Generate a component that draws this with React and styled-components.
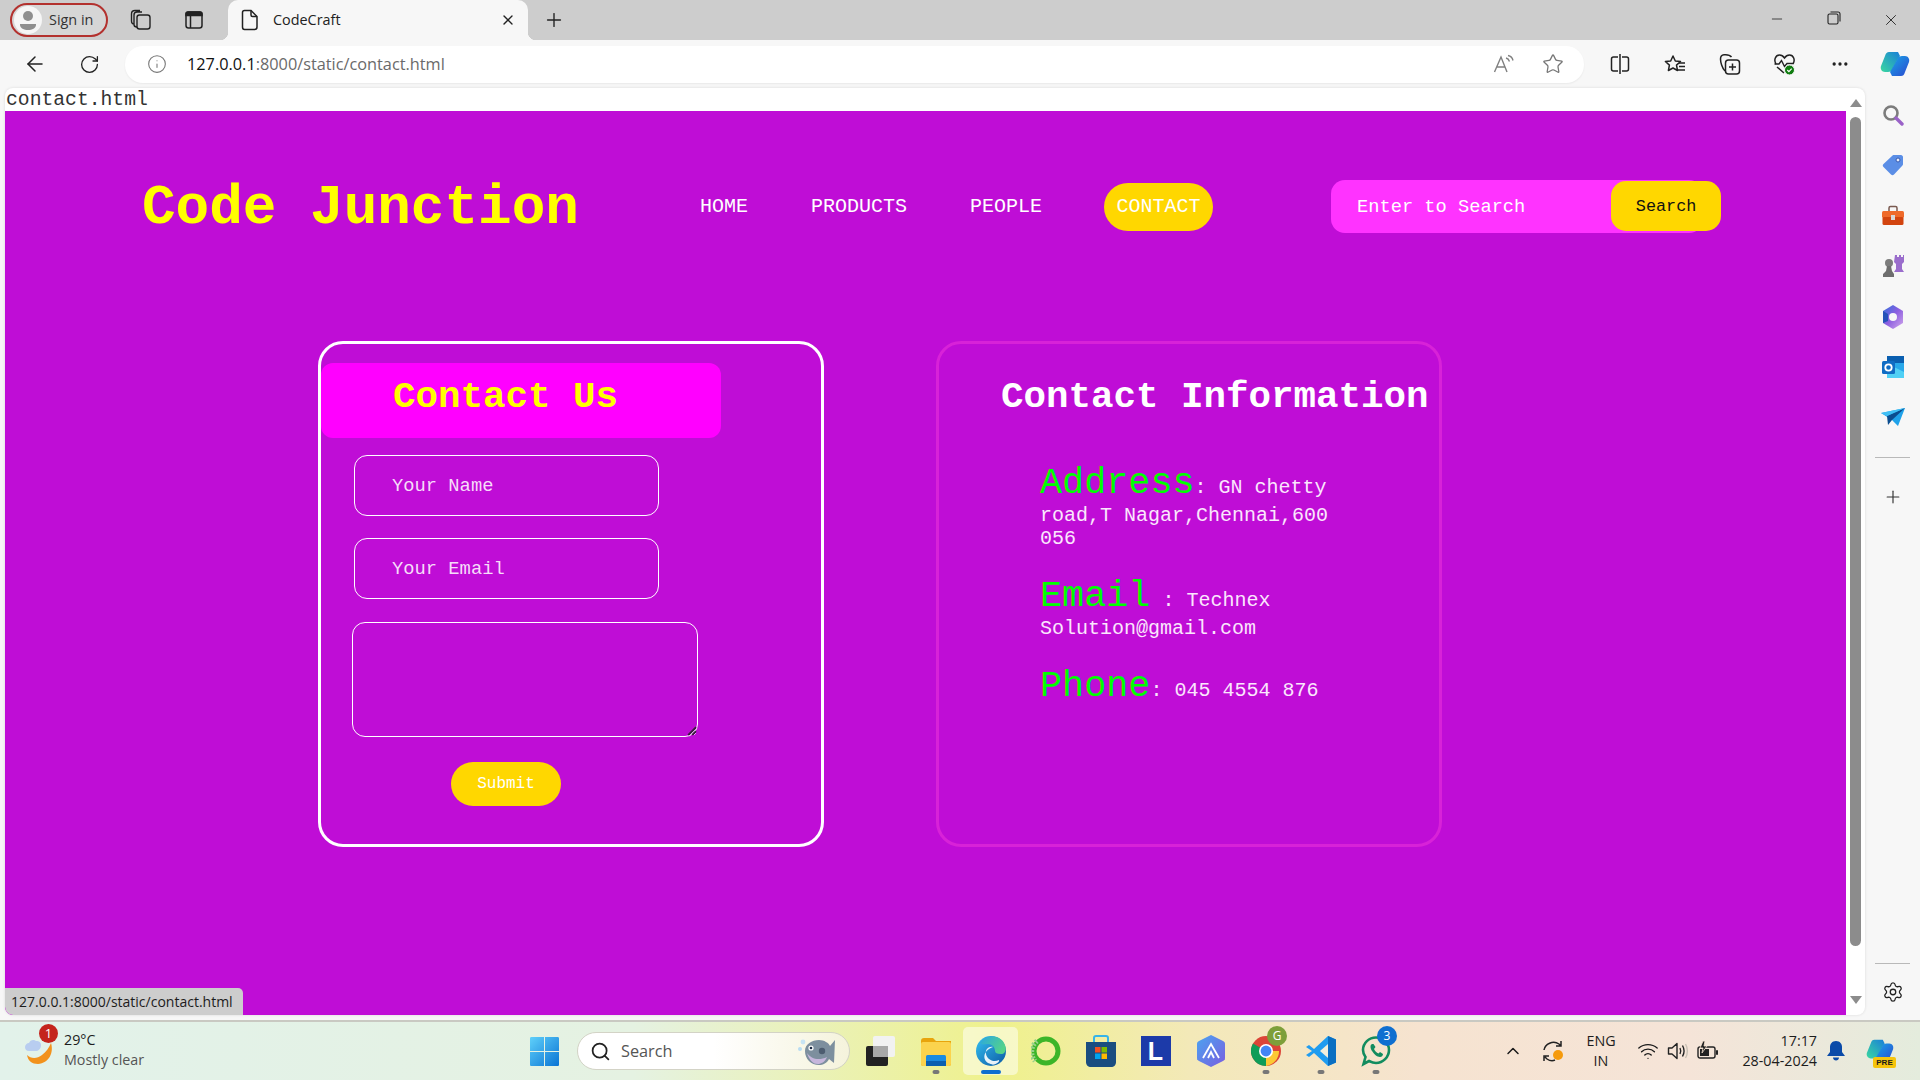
import React from "react";
import styled, { createGlobalStyle } from "styled-components";
import {
  ArrowLeft,
  RotateCw,
  Info,
  Star,
  X,
  Plus,
  Minus,
  Ellipsis,
  ChevronUp,
  Wifi,
  Settings,
  Search as SearchIcon,
} from "lucide-react";

const GlobalStyle = createGlobalStyle`
  html, body {
    margin: 0;
    padding: 0;
    width: 1920px;
    height: 1080px;
    overflow: hidden;
  }
  * { box-sizing: border-box; }
`;

const MONO = `"Liberation Mono", "Courier New", monospace`;
const UI = `"Open Sans", "Noto Sans", sans-serif`;

const Screen = styled.div`
  width: 1920px;
  height: 1080px;
  display: flex;
  flex-direction: column;
  font-family: ${UI};
  background: #f7f7f7;
  position: relative;
  overflow: hidden;
`;

/* ---- browser tab strip ---- */
const TabStrip = styled.div`
  height: 40px;
  flex: none;
  background: #cdcdcd;
  display: flex;
  align-items: center;
`;

const SignIn = styled.div`
  width: 98px;
  height: 34px;
  margin-left: 10px;
  border: 2px solid #b3312e;
  border-radius: 17px;
  display: flex;
  align-items: center;
  gap: 7px;
  padding: 0 0 1px 2px;
  font-size: 14.4px;
  color: #333;
  background: #d6d6d6;
`;

const Avatar = styled.span`
  width: 28px;
  height: 28px;
  margin-top: 1px;
  border-radius: 50%;
  background: #f6f6f6;
  display: flex;
  align-items: center;
  justify-content: center;
`;

const StripButton = styled.span`
  width: 53px;
  display: flex;
  justify-content: center;
  align-items: center;
  color: #222;
`;

const StripGroup = styled.div`
  margin-left: 6px;
  display: flex;
`;

const Tab = styled.div`
  width: 300px;
  height: 40px;
  margin-left: 8px;
  background: #f7f7f7;
  border-radius: 10px 10px 0 0;
  display: flex;
  align-items: center;
  padding: 0 12px 1px 13px;
  font-size: 14.4px;
  color: #222;
  position: relative;
  &::before, &::after {
    content: "";
    position: absolute;
    bottom: 0;
    width: 8px;
    height: 8px;
  }
  &::before {
    left: -8px;
    background: radial-gradient(circle at 0 0, transparent 8px, #f7f7f7 8.5px);
  }
  &::after {
    right: -8px;
    background: radial-gradient(circle at 100% 0, transparent 8px, #f7f7f7 8.5px);
  }
`;

const TabTitle = styled.span`
  margin-left: 14px;
  flex: 1;
`;

const NewTab = styled.span`
  width: 36px;
  margin-left: 8px;
  display: flex;
  justify-content: center;
  color: #222;
`;

const WindowControls = styled.div`
  margin-left: auto;
  padding-right: 1px;
  display: flex;
`;

const WindowButton = styled.span`
  width: 57px;
  display: flex;
  justify-content: center;
  color: #222;
`;

/* ---- browser toolbar ---- */
const Toolbar = styled.div`
  height: 48px;
  flex: none;
  display: flex;
  align-items: center;
  padding-left: 7px;
  background: #f7f7f7;
`;

const ToolButton = styled.span`
  width: 55px;
  height: 36px;
  flex: none;
  display: flex;
  align-items: center;
  justify-content: center;
  color: #222;
`;

const AddressBar = styled.div`
  width: 1459px;
  height: 37px;
  flex: none;
  margin: 0 8px 0 8px;
  border-radius: 18px;
  background: #fff;
  box-shadow: 0 1px 2px rgba(0, 0, 0, 0.06);
  display: flex;
  align-items: center;
  padding: 0 7px 0 22px;
  color: #777;
`;

const Url = styled.span`
  margin-left: 20px;
  flex: 1;
  font-size: 16.3px;
  padding-bottom: 1px;
  color: #6a6a6a;
  b {
    font-weight: 400;
    color: #111;
  }
`;

const AddressButton = styled.span`
  width: 49px;
  display: flex;
  justify-content: center;
  color: #777;
`;

/* ---- viewport and sidebar ---- */
const BrowserBody = styled.div`
  flex: 1;
  min-height: 0;
  display: flex;
  padding-left: 5px;
`;

const Viewport = styled.div`
  width: 1860px;
  height: 927px;
  flex: none;
  display: flex;
  background: #fff;
  border-radius: 8px;
  overflow: hidden;
  box-shadow: 0 0 3px rgba(0, 0, 0, 0.12);
  position: relative;
`;

const Document = styled.div`
  width: 1841px;
  flex: none;
  display: flex;
  flex-direction: column;
`;

const FileName = styled.div`
  height: 23px;
  flex: none;
  padding-left: 1px;
  font-family: ${MONO};
  font-size: 19.7px;
  line-height: 25px;
  color: #333;
`;

const Scrollbar = styled.div`
  flex: 1;
  display: flex;
  flex-direction: column;
  align-items: center;
  padding-top: 11px;
`;

const ScrollArrow = styled.span`
  width: 0;
  height: 0;
  border-left: 6px solid transparent;
  border-right: 6px solid transparent;
  ${(p) => (p.$down ? "border-top: 8px solid #8c8c8c; margin-top: 50px;" : "border-bottom: 8px solid #8c8c8c;")}
`;

const ScrollThumb = styled.span`
  width: 11px;
  height: 829px;
  margin-top: 10px;
  border-radius: 6px;
  background: #8c8c8c;
`;

const StatusBubble = styled.div`
  position: absolute;
  left: 0;
  bottom: 0;
  width: 238px;
  height: 27px;
  background: #cdcdcd;
  border-radius: 0 5px 0 8px;
  padding-left: 6px;
  font-size: 14px;
  line-height: 27px;
  color: #1c1c1c;
`;

const Sidebar = styled.aside`
  flex: 1;
  display: flex;
  flex-direction: column;
  align-items: center;
  padding-top: 16px;
`;

const SideIcon = styled.span`
  height: 22px;
  margin-bottom: 28.4px;
  display: flex;
  align-items: center;
  justify-content: center;
  color: #333;
`;

const SideRule = styled.span`
  width: 35px;
  height: 1px;
  margin-bottom: ${(p) => (p.$tight ? "17px" : "28px")};
  background: #b9b9b9;
`;

const SideFooter = styled.div`
  margin-top: auto;
  padding-bottom: 17px;
  display: flex;
  flex-direction: column;
  align-items: center;
`;

/* ---- the page itself ---- */
const Page = styled.main`
  flex: 1;
  background: #bf0dd6;
  font-family: ${MONO};
  color: #fff;
`;

const Navbar = styled.header`
  display: flex;
  align-items: center;
  padding: 69px 0 108px 137px;
`;

const Logo = styled.h1`
  margin: 0;
  width: 558px;
  height: 53px;
  font-size: 56px;
  line-height: 57px;
  font-weight: 700;
  color: #ffff00;
`;

const NavList = styled.nav`
  display: flex;
  gap: 63px;
`;

const NavLink = styled.a`
  height: 48px;
  padding: 0 ${(p) => (p.$active ? "12.5px" : "0")};
  margin-left: ${(p) => (p.$active ? "-1px" : "0")};
  border-radius: 24px;
  font-size: 20px;
  line-height: 48px;
  color: #fff;
  background: ${(p) => (p.$active ? "#ffd700" : "transparent")};
`;

const SearchBox = styled.form`
  width: 372px;
  height: 53px;
  flex: none;
  margin: 0 0 0 118px;
  border-radius: 14px;
  background: #ff33ff;
  display: flex;
  align-items: flex-start;
`;

const SearchInput = styled.input`
  width: 280px;
  height: 53px;
  flex: none;
  border: none;
  outline: none;
  background: transparent;
  padding: 0 0 0 26px;
  font-family: ${MONO};
  font-size: 18.7px;
  color: #fff;
  &::placeholder {
    color: #fff;
    opacity: 1;
  }
`;

const SearchButton = styled.button`
  width: 110px;
  height: 50px;
  flex: none;
  margin-top: 1px;
  border: none;
  border-radius: 15px;
  background: #ffd700;
  font-family: ${MONO};
  font-size: 16.8px;
  color: #111;
`;

const Cards = styled.section`
  display: flex;
  gap: 112px;
  padding-left: 313px;
`;

const Card = styled.div`
  width: 506px;
  height: 506px;
  border: 3px solid ${(p) => (p.$muted ? "#d822d8" : "#fff")};
  border-radius: 25px;
`;

const FormHeader = styled.div`
  width: 400px;
  height: 75px;
  margin-top: 19px;
  padding: 13px 0 0 72px;
  border-radius: 12px;
  background: #ff00ff;
`;

const FormTitle = styled.h2`
  margin: 0;
  font-size: 37.5px;
  font-weight: 700;
  color: #ffff00;
`;

const ContactForm = styled.form`
  display: flex;
  flex-direction: column;
  align-items: flex-start;
  gap: 22px;
  padding: 17px 0 0 31px;
`;

const TextField = styled.input`
  width: 305px;
  height: 61px;
  margin-left: 2px;
  border: 1px solid #fff;
  border-radius: 13px;
  outline: none;
  background: transparent;
  padding: 0 0 0 37px;
  font-family: ${MONO};
  font-size: 18.8px;
  color: #fff;
  &::placeholder {
    color: #f6dcf9;
    opacity: 1;
  }
`;

const MessageWrap = styled.div`
  margin-top: 1px;
  position: relative;
`;

const MessageField = styled.textarea`
  width: 346px;
  height: 115px;
  border: 1px solid #fff;
  border-radius: 13px;
  outline: none;
  background: transparent;
  display: block;
  color: #fff;
`;

const ResizeGrip = styled.svg`
  position: absolute;
  right: 1px;
  bottom: 1px;
  width: 11px;
  height: 11px;
`;

const SubmitButton = styled.button`
  width: 110px;
  height: 44px;
  margin: 3px 0 0 99px;
  border: none;
  border-radius: 22px;
  background: #ffd700;
  font-family: ${MONO};
  font-size: 16px;
  color: #fff;
`;

const InfoTitle = styled.h2`
  margin: 0;
  padding: 32px 0 0 62px;
  font-size: 37.5px;
  font-weight: 700;
  color: #fff;
  white-space: nowrap;
`;

const InfoList = styled.div`
  width: 401px;
  padding: 44px 0 0 101px;
  display: flex;
  flex-direction: column;
  gap: 25px;
`;

const InfoItem = styled.p`
  margin: 0;
  font-size: 20px;
  color: #fbe6fd;
`;

const InfoLabel = styled.span`
  display: inline-block;
  margin: 3px 0;
  font-size: 36.8px;
  line-height: 36px;
  color: #00ff00;
`;

/* ---- windows taskbar ---- */
const Taskbar = styled.footer`
  height: 60px;
  flex: none;
  border-top: 2px solid #c9c9c2;
  display: flex;
  align-items: center;
  background: linear-gradient(90deg, #e2f2ea 0%, #e5f2e2 33%, #eff18c 52%, #f3e9b8 62%, #f6e3d0 74%, #f5e4d8 88%, #e4ecdd 100%);
  font-size: 14.3px;
  color: #1d1d1d;
`;

const Weather = styled.div`
  width: 530px;
  flex: none;
  padding: 0 0 2px 24px;
  display: flex;
  align-items: center;
  gap: 8px;
  position: relative;
`;

const WeatherBadge = styled.span`
  position: absolute;
  left: 39px;
  top: -6px;
  width: 19px;
  height: 19px;
  border-radius: 50%;
  background: #c4241c;
  color: #fff;
  font-size: 13px;
  line-height: 19px;
  text-align: center;
`;

const WeatherText = styled.div`
  line-height: 20px;
  span {
    display: block;
    color: #555;
  }
`;

const TaskSearch = styled.div`
  width: 273px;
  height: 38px;
  margin-left: 18px;
  border-radius: 19px;
  border: 1px solid #d3d3c6;
  background: linear-gradient(90deg, #fff 50%, #f5f3dc 100%);
  display: flex;
  align-items: center;
  padding: 0 12px;
  font-size: 16.3px;
  color: #555;
  gap: 10px;
`;

const FishSlot = styled.span`
  margin-left: auto;
  display: flex;
`;

const AppRow = styled.div`
  margin-left: 3px;
  display: flex;
`;

const AppSlot = styled.span`
  width: 55px;
  height: 48px;
  display: flex;
  align-items: center;
  justify-content: center;
  position: relative;
  border-radius: 5px;
  ${(p) => p.$active && "background: rgba(255, 255, 255, 0.5);"}
  &::after {
    content: "";
    display: ${(p) => (p.$running || p.$active ? "block" : "none")};
    position: absolute;
    bottom: 1px;
    left: 50%;
    transform: translateX(-50%);
    width: ${(p) => (p.$active ? "20px" : "7px")};
    height: 4px;
    border-radius: 2px;
    background: ${(p) => (p.$active ? "#0f6fd0" : "#777")};
  }
`;

const AppBadge = styled.span`
  position: absolute;
  top: -1px;
  right: 6px;
  width: 20px;
  height: 20px;
  border-radius: 50%;
  background: ${(p) => p.$color};
  color: #fff;
  font-size: 12px;
  line-height: 20px;
  text-align: center;
`;

const Tray = styled.div`
  margin-left: auto;
  display: flex;
  align-items: center;
  height: 100%;
`;

const TrayIcon = styled.span`
  width: ${(p) => p.$w || 30}px;
  margin-left: ${(p) => p.$gap || 0}px;
  display: flex;
  justify-content: center;
  color: #1a1a1a;
`;

const Lang = styled.div`
  width: 40px;
  margin-left: 13px;
  text-align: center;
  line-height: 20px;
`;

const Clock = styled.div`
  width: 88px;
  margin-left: 6px;
  text-align: right;
  line-height: 20px;
`;

/* ---- drawn icons ---- */
const Person = () => (
  <svg width="20" height="22" viewBox="0 0 20 22">
    <circle cx="10" cy="7" r="5" fill="#8f8f8f" />
    <path d="M2 15h16v1c0 3-4 5-8 5s-8-2-8-5z" fill="#8f8f8f" />
  </svg>
);

const WorkspaceIcon = () => (
  <svg width="22" height="22" viewBox="0 0 22 22" fill="none" stroke="#222" strokeWidth="1.4">
    <rect x="7" y="6" width="13" height="14" rx="2.5" />
    <path d="M7 18c-2 0-3-1-3-2.500V6c0-2 1-3 3-3h5M4 15C2.500 15 1.500 14 1.500 12V5C1.500 3 3 1.500 5 1.500h5" />
  </svg>
);

const TabActionsIcon = () => (
  <svg width="20" height="20" viewBox="0 0 20 20" fill="none" stroke="#222" strokeWidth="1.5">
    <rect x="2" y="2" width="16" height="16" rx="2.5" />
    <path d="M2 5.500h16V4c0-1-1-2-2-2H4C3 2 2 3 2 4z" fill="#222" />
    <path d="M6.500 6v12" />
  </svg>
);

const FileIcon = () => (
  <svg width="18" height="22" viewBox="0 0 18 22" fill="none" stroke="#222" strokeWidth="1.5">
    <path d="M3.500 1.500h6.500l6 6V18c0 1.500-1 2.500-2.500 2.500h-10C2 20.500 1.500 19.500 1.500 18V3.500c0-1 1-2 2-2z" />
    <path d="M10 1.500V6c0 1 .5 1.500 1.500 1.500H16" />
  </svg>
);

const RestoreIcon = () => (
  <svg width="14" height="14" viewBox="0 0 14 14" fill="none" stroke="#222" strokeWidth="1.1">
    <rect x="1" y="3" width="10" height="10" rx="1.5" />
    <path d="M3.500 1h7.500c1 0 2 1 2 2v7.500" />
  </svg>
);

const ReadAloudIcon = () => (
  <svg width="22" height="20" viewBox="0 0 22 20" fill="none" stroke="#808080" strokeWidth="1.4">
    <path d="M1.500 18L8 3l6 15M3.800 13h8.500" />
    <path d="M13 4c2 .5 3 2 3.500 3.500M15 1.500c2.500.5 4.500 2.500 5 5" />
  </svg>
);

const SplitIcon = () => (
  <svg width="20" height="22" viewBox="0 0 20 22" fill="none" stroke="#222" strokeWidth="1.5">
    <path d="M8 4H3.500C2.500 4 1.500 5 1.500 6v10c0 1 1 2 2 2H8M12 4h4.500c1 0 2 1 2 2v10c0 1-1 2-2 2H12M10 1v20" />
  </svg>
);

const FavoritesIcon = () => (
  <svg width="22" height="21" viewBox="0 0 22 21" fill="none" stroke="#222" strokeWidth="1.5">
    <path d="M9 0l2.300 5 5.200.5-4 3.600 1 5.400L9 12l-4.600 2.500 1-5.400-4-3.600L6.700 5z" transform="translate(0 2)" strokeLinejoin="round" />
    <path d="M15 9h6M15 12.500h6M14 16h7" />
  </svg>
);

const CollectionsIcon = () => (
  <svg width="22" height="22" viewBox="0 0 22 22" fill="none" stroke="#222" strokeWidth="1.5">
    <path d="M6 18C3 15 1.500 9 1.500 6 1.500 3.500 3 2 5 1.800 8 1.500 11 2 12.500 4" />
    <rect x="6.500" y="7" width="14" height="14" rx="3" fill="#f7f7f7" />
    <path d="M13.500 10.500v7M10 14h7" />
  </svg>
);

const HealthIcon = () => (
  <svg width="24" height="24" viewBox="0 0 24 24">
    <path d="M3 12C.5 8 2.500 3 6.500 3c2.500 0 4 1.500 5 3 1-1.500 2.500-3 5-3 4 0 6 5 3.500 9M4 15l7 6" fill="none" stroke="#222" strokeWidth="1.5" />
    <path d="M1.500 12H6l2.500-3.500 3 6 2.500-3h6" fill="none" stroke="#222" strokeWidth="1.4" />
    <circle cx="16.500" cy="18" r="5" fill="#107c10" stroke="#f7f7f7" />
    <path d="M14.300 18l1.600 1.600 2.800-2.900" fill="none" stroke="#fff" strokeWidth="1.2" />
  </svg>
);

const CopilotIcon = ({ id, size = 30 }) => (
  <svg width={size} height={size} viewBox="0 0 30 30">
    <defs>
      <linearGradient id={`${id}a`} x1="0" y1="1" x2="1" y2="0">
        <stop offset="0" stopColor="#3ad8a0" />
        <stop offset="1" stopColor="#1a7fd8" />
      </linearGradient>
      <linearGradient id={`${id}b`} x1="0" y1="0" x2="1" y2="1">
        <stop offset="0" stopColor="#1aa7e8" />
        <stop offset="1" stopColor="#2a48d0" />
      </linearGradient>
    </defs>
    <path d="M9 3h9l2 4-7 12c-1 3-3 4-5 4H5c-3 0-5-3-4-6l4-10c1-3 2-4 4-4z" fill={`url(#${id}a)`} />
    <path d="M21 27h-9l-2-4 7-12c1-3 3-4 5-4h3c3 0 5 3 4 6l-4 10c-1 3-2 4-4 4z" fill={`url(#${id}b)`} />
  </svg>
);

const SideSearch = () => (
  <svg width="22" height="22" viewBox="0 0 22 22" fill="none">
    <circle cx="9" cy="9" r="6.500" stroke="#7c7c7c" strokeWidth="2.600" />
    <path d="M14 14l6 6" stroke="#9a62c8" strokeWidth="3.400" strokeLinecap="round" />
  </svg>
);

const SideTag = () => (
  <svg width="22" height="22" viewBox="0 0 22 22">
    <path d="M12 1h7c1 0 2 1 2 2v7c0 1-.5 1.500-1 2l-8 8.500c-1 1-2 1-3 0L1.500 13c-1-1-1-2 0-3L10 2c.5-.5 1-1 2-1z" fill="#5b8ee6" />
    <circle cx="16" cy="6" r="2" fill="#e8eefb" stroke="#3559b0" />
  </svg>
);

const SideToolbox = () => (
  <svg width="24" height="22" viewBox="0 0 24 22">
    <path d="M8 6V3c0-1 .5-1.500 1.500-1.500h5C15.500 1.500 16 2 16 3v3" fill="none" stroke="#7a5a50" strokeWidth="1.500" />
    <rect x="1" y="6" width="22" height="7" rx="1.500" fill="#ef6a2a" />
    <rect x="1.500" y="12" width="21" height="8" rx="1.500" fill="#d2440f" />
    <rect x="10" y="10" width="4" height="5" fill="#d8d8d8" />
  </svg>
);

const SideChess = () => (
  <svg width="24" height="24" viewBox="0 0 24 24">
    <path d="M14 1h2v2h2V1h2v2h2V1h1v7l-2 2v5l2 3H13l2-3v-5l-2-2z" fill="#9a6dcc" />
    <circle cx="8" cy="9" r="4" fill="#7c7c7c" />
    <path d="M6 12h4l1 5 2 3v3H2v-3l3-3z" fill="#6e6e6e" />
  </svg>
);

const SideM365 = () => (
  <svg width="22" height="24" viewBox="0 0 22 24">
    <defs>
      <linearGradient id="m3a" x1="0" y1="0" x2="1" y2="1">
        <stop offset="0" stopColor="#2f6fdc" />
        <stop offset="0.5" stopColor="#8d5fe0" />
        <stop offset="1" stopColor="#d3a9ec" />
      </linearGradient>
    </defs>
    <path d="M11 0l10 6v12l-10 6-10-6V6z" fill="url(#m3a)" />
    <path d="M1 6l5 3v7l-5 2z" fill="#2452b8" />
    <circle cx="11" cy="12" r="4" fill="#f7f7f7" />
  </svg>
);

const SideOutlook = () => (
  <svg width="22" height="22" viewBox="0 0 22 22">
    <rect x="5" y="0" width="17" height="22" rx="1.500" fill="#28a8ea" />
    <rect x="5" y="0" width="17" height="7" fill="#0a5fb0" />
    <path d="M10 10l12 6v6H5v-8z" fill="#50d0f5" />
    <rect x="0" y="5" width="13" height="13" rx="1.500" fill="#0f6cc4" />
    <circle cx="6.500" cy="11.500" r="3.200" fill="none" stroke="#fff" strokeWidth="1.800" />
  </svg>
);

const SideSend = () => (
  <svg width="24" height="20" viewBox="0 0 24 20">
    <path d="M0 6l24-5-7 18-6-6z" fill="#1fa2ea" />
    <path d="M6 9l18-8-13 12-4 5z" fill="#0b4d8f" />
    <path d="M0 6l6 3 18-8z" fill="#40c0f5" />
  </svg>
);

const SunMoon = () => (
  <svg width="32" height="34" viewBox="0 0 32 34">
    <path d="M27 10c3 10-2 20-13 21C8 31 4 28 3 22c4 4 10 4 15 0 4-3 7-7 9-12z" fill="#f2921c" />
    <path d="M5 18c-3 0-4-2-4-4s2-4 4-4c1-3 5-4 7-2 1 0 5 0 5 4 0 4-3 6-5 6z" fill="#b8cdf0" />
  </svg>
);

const StartLogo = () => (
  <svg width="29" height="29" viewBox="0 0 29 29">
    <defs>
      <linearGradient id="winA" x1="0" y1="0" x2="1" y2="1">
        <stop offset="0" stopColor="#5fd0fa" />
        <stop offset="1" stopColor="#0a74d4" />
      </linearGradient>
    </defs>
    <path d="M0 1.500C0 .5.500 0 1.500 0H14v14H0zM15 0h12.500c1 0 1.500.5 1.500 1.500V14H15zM0 15h14v14H1.500C.5 29 0 28.500 0 27.500zM15 15h14v12.500c0 1-.5 1.500-1.500 1.500H15z" fill="url(#winA)" />
  </svg>
);

const Fish = () => (
  <svg width="40" height="36" viewBox="0 0 40 36">
    <circle cx="3" cy="16" r="2" fill="#b8dcf2" />
    <circle cx="6" cy="9" r="2.400" fill="#c8e4f4" />
    <path d="M8 18c0-7 7-11 14-11 5 0 10 3 11 6l5-6-1 23-5-4c-2 4-6 6-10 6C14 32 8 26 8 18z" fill="#7d8f9e" />
    <path d="M10 20c4 6 12 8 20 4-2 5-6 7-9 7-6 0-9-5-11-11z" fill="#c6b6dc" />
    <circle cx="14" cy="15" r="2.600" fill="#fff" />
    <circle cx="14" cy="15" r="1.300" fill="#1b2a44" />
    <circle cx="25" cy="18" r="3.200" fill="#4d5d70" />
  </svg>
);

const TaskViewIcon = () => (
  <svg width="30" height="30" viewBox="0 0 30 30">
    <rect x="0" y="10" width="22" height="20" rx="2" fill="#222" />
    <rect x="7" y="0" width="22" height="21" rx="2" fill="#f2f2f2" />
    <rect x="7" y="10" width="15" height="11" fill="#a8a8a8" />
  </svg>
);

const ExplorerIcon = () => (
  <svg width="30" height="30" viewBox="0 0 30 30">
    <path d="M0 5c0-2 1-3 3-3h9l3 3h15v23c0 1-1 2-2 2H2c-1 0-2-1-2-2z" fill="#e8a40c" />
    <rect x="0" y="6" width="30" height="24" rx="2" fill="#fbd34d" />
    <rect x="5" y="19" width="20" height="7" rx="1.500" fill="#1a8ae0" />
    <rect x="5" y="25" width="20" height="5" fill="#0a5fb0" />
  </svg>
);

const EdgeIcon = () => (
  <svg width="30" height="30" viewBox="0 0 30 30">
    <defs>
      <linearGradient id="edgeA" x1="0" y1="0" x2="1" y2="1">
        <stop offset="0" stopColor="#35c1f1" />
        <stop offset="1" stopColor="#0c59a4" />
      </linearGradient>
      <linearGradient id="edgeB" x1="0" y1="0" x2="1" y2="0.500">
        <stop offset="0" stopColor="#2ba7e0" />
        <stop offset="1" stopColor="#54d38a" />
      </linearGradient>
    </defs>
    <circle cx="15" cy="15" r="15" fill="url(#edgeA)" />
    <path d="M4 7C9-1 23-2 28 7c3 5 2 11-3 11-4 0-6-1-6-3 0-4-3-7-7-7-4 0-6 1-8-1z" fill="url(#edgeB)" />
    <path d="M17 11c-4-1-8 2-7 7 1 5 7 9 13 6 1 2-4 5-8 5 4-1 1 0-3-2-5-3-6-12 5-16z" fill="#fff" opacity="0.9" />
  </svg>
);

const RingIcon = () => (
  <svg width="30" height="32" viewBox="0 0 30 32" fill="none">
    <circle cx="15" cy="16" r="12" stroke="#3cb528" strokeWidth="5" />
    <path d="M6 6a14 14 0 0 0-2 20" stroke="#9ad08a" strokeWidth="5" strokeDasharray="2 1.500" />
  </svg>
);

const StoreIcon = () => (
  <svg width="30" height="32" viewBox="0 0 30 32">
    <path d="M8 7V3c0-1 1-2 2-2h10c1 0 2 1 2 2v4" fill="none" stroke="#35b4ea" strokeWidth="2" />
    <path d="M0 7h30v20c0 3-2 5-5 5H5c-3 0-5-2-5-5z" fill="#1a4d80" />
    <rect x="9" y="12" width="5.500" height="5.500" fill="#f25022" />
    <rect x="15.500" y="12" width="5.500" height="5.500" fill="#7fba00" />
    <rect x="9" y="18.500" width="5.500" height="5.500" fill="#00a4ef" />
    <rect x="15.500" y="18.500" width="5.500" height="5.500" fill="#ffb900" />
  </svg>
);

const LetterTile = styled.span`
  width: 30px;
  height: 30px;
  background: #1c3aa9;
  color: #fff;
  font-family: "Liberation Sans", sans-serif;
  font-weight: 700;
  font-size: 25px;
  line-height: 30px;
  text-align: center;
`;

const HexIcon = () => (
  <svg width="28" height="32" viewBox="0 0 28 32">
    <defs>
      <linearGradient id="hexA" x1="0" y1="0" x2="1" y2="1">
        <stop offset="0" stopColor="#4aa4f0" />
        <stop offset="1" stopColor="#7a5ee0" />
      </linearGradient>
    </defs>
    <path d="M14 0l12 6c1 .5 2 1 2 3v14c0 2-1 2.500-2 3l-12 6-12-6c-1-.5-2-1-2-3V9c0-2 1-2.500 2-3z" fill="url(#hexA)" />
    <path d="M6 23l8-14 8 14M11 23l3-6 3 6" fill="none" stroke="#fff" strokeWidth="1.800" />
  </svg>
);

const ChromeIcon = () => (
  <svg width="30" height="30" viewBox="0 0 30 30">
    <circle cx="15" cy="15" r="15" fill="#db4437" />
    <path d="M15 15L2 7.500A15 15 0 0 0 15 30z" fill="#0f9d58" transform="rotate(0 15 15)" />
    <path d="M15 15h13A15 15 0 0 1 15 30z" fill="#fcc934" />
    <circle cx="15" cy="15" r="7" fill="#fff" />
    <circle cx="15" cy="15" r="5.400" fill="#4285f4" />
  </svg>
);

const VsCodeIcon = () => (
  <svg width="30" height="30" viewBox="0 0 30 30">
    <path d="M22 0l8 3.500v23L22 30 8 17l-5 4-3-2 6-4-6-4 3-2 5 4z" fill="#1f9cf0" />
    <path d="M22 0l8 3.500v23L22 30z" fill="#0a6fc2" />
    <path d="M22 8v14l-8-7z" fill="#f2efdc" />
  </svg>
);

const WhatsAppIcon = () => (
  <svg width="30" height="32" viewBox="0 0 30 32" fill="none">
    <path d="M2.500 29l2-7C3 20 2 17.500 2 15 2 8 8 2.500 15 2.500S28 8 28 15s-6 13-13 13c-2.500 0-5-1-7-2z" stroke="#128c5e" strokeWidth="2.600" />
    <path d="M11 9c-2 1-2 4 0 7s5 6 8 6c2 0 3-2 3-3l-3-2-1.500 1.500c-2-1-3.500-2.500-4.500-4.500L14.500 12 12.500 9z" fill="#128c5e" />
  </svg>
);

const SyncIcon = () => (
  <svg width="24" height="24" viewBox="0 0 24 24" fill="none" stroke="#222" strokeWidth="1.500">
    <path d="M3 11C4 5 12 1 18 5l2 2M20 2v5h-5M4 18l2 2c3 2 6 2 8 1M3 22v-5h5" />
    <circle cx="17" cy="16" r="5" fill="#f59a0c" stroke="none" />
  </svg>
);

const VolumeIcon = () => (
  <svg width="22" height="20" viewBox="0 0 22 20" fill="none" stroke="#222" strokeWidth="1.400">
    <path d="M1.500 7v6h3.500l5 4.500V2.500L5 7z" strokeLinejoin="round" />
    <path d="M13 7c1 2 1 4 0 6M15.500 4.500c2 3.500 2 7.500 0 11" />
    <path d="M18.500 3c2.500 4 2.500 10 0 14" stroke="#c8c0b4" />
  </svg>
);

const BatteryIcon = () => (
  <svg width="22" height="20" viewBox="0 0 22 20">
    <rect x="1" y="6" width="17" height="11" rx="2" fill="none" stroke="#222" strokeWidth="1.400" />
    <rect x="3" y="8" width="9" height="7" fill="#222" />
    <rect x="19" y="9" width="2" height="5" rx="1" fill="#222" />
    <path d="M6 0L3 7h3L5 12l5-7H7l1-5z" fill="#222" stroke="#f6e3d0" strokeWidth="0.800" />
  </svg>
);

const BellIcon = () => (
  <svg width="18" height="20" viewBox="0 0 18 20">
    <path d="M9 0c4 0 6 3 6 6v5l3 4H0l3-4V6c0-3 2-6 6-6z" fill="#0a4aa8" />
    <path d="M6 16.500h6c0 2-1.500 3-3 3s-3-1-3-3z" fill="#0a4aa8" />
  </svg>
);

const PreTag = styled.span`
  position: absolute;
  right: -2px;
  bottom: -3px;
  width: 23px;
  height: 11px;
  border-radius: 2px;
  background: #f6c40c;
  color: #1a1a1a;
  font-family: "Liberation Sans", sans-serif;
  font-weight: 700;
  font-size: 8px;
  line-height: 11px;
  text-align: center;
`;

const CopilotTray = styled.span`
  width: 28px;
  margin: 0 26px 0 20px;
  position: relative;
  display: flex;
`;

const App = () => {
  return (
    <Screen>
      <GlobalStyle />
      <TabStrip>
        <SignIn>
          <Avatar><Person /></Avatar>
          Sign in
        </SignIn>
        <StripGroup>
          <StripButton><WorkspaceIcon /></StripButton>
          <StripButton><TabActionsIcon /></StripButton>
        </StripGroup>
        <Tab>
          <FileIcon />
          <TabTitle>CodeCraft</TabTitle>
          <X size={16} strokeWidth={2} />
        </Tab>
        <NewTab><Plus size={22} strokeWidth={1.5} /></NewTab>
        <WindowControls>
          <WindowButton><Minus size={16} strokeWidth={1.2} /></WindowButton>
          <WindowButton><RestoreIcon /></WindowButton>
          <WindowButton><X size={18} strokeWidth={1.2} /></WindowButton>
        </WindowControls>
      </TabStrip>

      <Toolbar>
        <ToolButton><ArrowLeft size={24} strokeWidth={1.5} /></ToolButton>
        <ToolButton><RotateCw size={21} strokeWidth={1.5} /></ToolButton>
        <AddressBar>
          <Info size={20} strokeWidth={1.3} />
          <Url><b>127.0.0.1</b>:8000/static/contact.html</Url>
          <AddressButton><ReadAloudIcon /></AddressButton>
          <AddressButton><Star size={22} strokeWidth={1.4} /></AddressButton>
        </AddressBar>
        <ToolButton><SplitIcon /></ToolButton>
        <ToolButton><FavoritesIcon /></ToolButton>
        <ToolButton><CollectionsIcon /></ToolButton>
        <ToolButton><HealthIcon /></ToolButton>
        <ToolButton><Ellipsis size={20} strokeWidth={2} /></ToolButton>
        <ToolButton><CopilotIcon id="cpA" /></ToolButton>
      </Toolbar>

      <BrowserBody>
        <Viewport>
          <Document>
            <FileName>contact.html</FileName>
            <Page>
              <Navbar>
                <Logo>Code Junction</Logo>
                <NavList>
                  <NavLink>HOME</NavLink>
                  <NavLink>PRODUCTS</NavLink>
                  <NavLink>PEOPLE</NavLink>
                  <NavLink $active>CONTACT</NavLink>
                </NavList>
                <SearchBox>
                  <SearchInput placeholder="Enter to Search" />
                  <SearchButton type="button">Search</SearchButton>
                </SearchBox>
              </Navbar>
              <Cards>
                <Card>
                  <FormHeader>
                    <FormTitle>Contact Us</FormTitle>
                  </FormHeader>
                  <ContactForm>
                    <TextField placeholder="Your Name" />
                    <TextField placeholder="Your Email" />
                    <MessageWrap>
                      <MessageField />
                      <ResizeGrip viewBox="0 0 11 11">
                        <path d="M2 10l8-8M6 10l4-4" stroke="#3a1f3d" strokeWidth="1.6" />
                        <path d="M4 10l6-6" stroke="#d9a8e0" strokeWidth="1" />
                      </ResizeGrip>
                    </MessageWrap>
                    <SubmitButton type="button">Submit</SubmitButton>
                  </ContactForm>
                </Card>
                <Card $muted>
                  <InfoTitle>Contact Information</InfoTitle>
                  <InfoList>
                    <InfoItem><InfoLabel>Address</InfoLabel>: GN chetty road,T Nagar,Chennai,600 056</InfoItem>
                    <InfoItem><InfoLabel>Email</InfoLabel> : Technex Solution@gmail.com</InfoItem>
                    <InfoItem><InfoLabel>Phone</InfoLabel>: 045 4554 876</InfoItem>
                  </InfoList>
                </Card>
              </Cards>
            </Page>
          </Document>
          <Scrollbar>
            <ScrollArrow />
            <ScrollThumb />
            <ScrollArrow $down />
          </Scrollbar>
          <StatusBubble>127.0.0.1:8000/static/contact.html</StatusBubble>
        </Viewport>
        <Sidebar>
          <SideIcon><SideSearch /></SideIcon>
          <SideIcon><SideTag /></SideIcon>
          <SideIcon><SideToolbox /></SideIcon>
          <SideIcon><SideChess /></SideIcon>
          <SideIcon><SideM365 /></SideIcon>
          <SideIcon><SideOutlook /></SideIcon>
          <SideIcon><SideSend /></SideIcon>
          <SideRule />
          <SideIcon><Plus size={20} strokeWidth={1.4} /></SideIcon>
          <SideFooter>
            <SideRule $tight />
            <Settings size={22} strokeWidth={1.4} color="#222" />
          </SideFooter>
        </Sidebar>
      </BrowserBody>

      <Taskbar>
        <Weather>
          <SunMoon />
          <WeatherBadge>1</WeatherBadge>
          <WeatherText>
            29°C
            <span>Mostly clear</span>
          </WeatherText>
        </Weather>
        <StartLogo />
        <TaskSearch>
          <SearchIcon size={21} strokeWidth={2} color="#222" />
          Search
          <FishSlot><Fish /></FishSlot>
        </TaskSearch>
        <AppRow>
          <AppSlot><TaskViewIcon /></AppSlot>
          <AppSlot $running><ExplorerIcon /></AppSlot>
          <AppSlot $active><EdgeIcon /></AppSlot>
          <AppSlot><RingIcon /></AppSlot>
          <AppSlot><StoreIcon /></AppSlot>
          <AppSlot><LetterTile>L</LetterTile></AppSlot>
          <AppSlot><HexIcon /></AppSlot>
          <AppSlot $running><ChromeIcon /><AppBadge $color="#7d9f3a">G</AppBadge></AppSlot>
          <AppSlot $running><VsCodeIcon /></AppSlot>
          <AppSlot $running><WhatsAppIcon /><AppBadge $color="#0f6fd0">3</AppBadge></AppSlot>
        </AppRow>
        <Tray>
          <TrayIcon><ChevronUp size={20} strokeWidth={1.8} /></TrayIcon>
          <TrayIcon $gap={10}><SyncIcon /></TrayIcon>
          <Lang>ENG<br />IN</Lang>
          <TrayIcon $gap={12}><Wifi size={22} strokeWidth={1.5} /></TrayIcon>
          <TrayIcon><VolumeIcon /></TrayIcon>
          <TrayIcon><BatteryIcon /></TrayIcon>
          <Clock>17:17<br />28-04-2024</Clock>
          <TrayIcon $w={20} $gap={9}><BellIcon /></TrayIcon>
          <CopilotTray>
            <CopilotIcon id="cpB" size={28} />
            <PreTag>PRE</PreTag>
          </CopilotTray>
        </Tray>
      </Taskbar>
    </Screen>
  );
};

export default App;
